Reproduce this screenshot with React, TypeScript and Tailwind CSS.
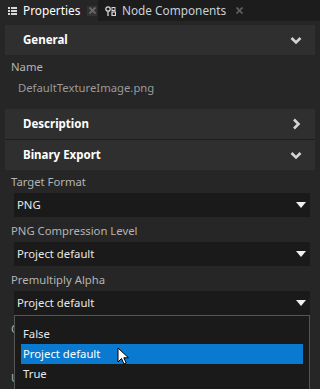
import React from "react";

const Chevron = ({ dir }: { dir: "down" | "right" }) => (
  <svg width="12" height="12" viewBox="0 0 12 12" className="block">
    {dir === "down" ? (
      <path d="M1.5 4 L6 8.5 L10.5 4" fill="none" stroke="#d4d4d4" strokeWidth="2.6" strokeLinejoin="miter" />
    ) : (
      <path d="M4 1.5 L8.5 6 L4 10.5" fill="none" stroke="#d4d4d4" strokeWidth="2.6" strokeLinejoin="miter" />
    )}
  </svg>
);

const Triangle = () => (
  <svg width="10" height="6" viewBox="0 0 10 6" className="block">
    <path d="M0 0 H10 L5 6 Z" fill="#f0f0f0" />
  </svg>
);

const Header = ({ title, open }: { title: string; open: boolean }) => (
  <div className="mx-[5px] h-[30px] bg-[#2f2f2f] flex items-center justify-between pl-[18px] pr-[13px]">
    <span className="text-[11.5px] font-bold text-white">{title}</span>
    <Chevron dir={open ? "down" : "right"} />
  </div>
);

const Field = ({ label, value }: { label: string; value: string }) => (
  <div className="flex flex-col">
    <div className="h-[16px] leading-[16px] pl-[11px] text-[11.3px] text-[#b4b4b4] whitespace-nowrap">{label}</div>
    <div className="mt-[3px] ml-[14px] mr-[10px] h-[24px] bg-[#1a1a1a] flex items-center justify-between pl-[3px] pr-[4px]">
      <span className="text-[11.3px] text-[#e8e8e8]">{value}</span>
      <Triangle />
    </div>
  </div>
);

export default function App() {
  return (
    <div
      className="w-[320px] h-[389px] bg-[#1c1c1c] overflow-hidden relative"
      style={{ fontFamily: '"Noto Sans", "Open Sans", sans-serif' }}
    >
      {/* Tabs */}
      <div className="h-[21px] flex items-stretch">
        <div className="w-[98px] bg-[#262626] flex items-center pl-[8px]">
          <svg width="9" height="8" viewBox="0 0 9 8" className="block">
            <rect x="0" y="0" width="2" height="2" fill="#d8d8d8" />
            <rect x="3" y="0" width="6" height="2" fill="#d8d8d8" />
            <rect x="0" y="3" width="2" height="2" fill="#d8d8d8" />
            <rect x="3" y="3" width="6" height="2" fill="#d8d8d8" />
            <rect x="0" y="6" width="2" height="2" fill="#d8d8d8" />
            <rect x="3" y="6" width="6" height="2" fill="#d8d8d8" />
          </svg>
          <span className="ml-[6px] text-[11.8px] text-white">Properties</span>
          <span className="ml-[7px] w-[10px] h-[10px] bg-[#333333] flex items-center justify-center">
            <svg width="7" height="7" viewBox="0 0 7 7" className="block">
              <path d="M0.5 0.5 L6.5 6.5 M6.5 0.5 L0.5 6.5" stroke="#6a6a6a" strokeWidth="1.8" />
            </svg>
          </span>
        </div>
        <div className="flex items-center pl-[7px]">
          <svg width="11" height="10" viewBox="0 0 11 10" className="block">
            <circle cx="3" cy="3" r="2.2" fill="none" stroke="#d8d8d8" strokeWidth="1.3" />
            <path d="M3 5.2 V10" stroke="#d8d8d8" strokeWidth="1.3" />
            <rect x="7" y="1.5" width="3" height="3" fill="none" stroke="#d8d8d8" strokeWidth="1" />
            <rect x="7" y="6" width="3.5" height="3.5" fill="none" stroke="#d8d8d8" strokeWidth="1.2" />
          </svg>
          <span className="ml-[6px] text-[11.8px] text-[#c8d0d8]">Node Components</span>
          <span className="ml-[10px] flex items-center">
            <svg width="7" height="7" viewBox="0 0 7 7" className="block">
              <path d="M0.5 0.5 L6.5 6.5 M6.5 0.5 L0.5 6.5" stroke="#5e5e5e" strokeWidth="1.8" />
            </svg>
          </span>
        </div>
      </div>

      {/* Panel */}
      <div className="bg-[#262626] h-[368px] pt-[4px]">
        <Header title="General" open />
        <div className="h-[16px] leading-[16px] mt-[4px] pl-[11px] text-[11.3px] text-[#b4b4b4]">Name</div>
        <div className="h-[16px] leading-[16px] mt-[5px] pl-[18px] text-[11.3px] text-[#9a9a9a]">DefaultTextureImage.png</div>
        <div className="h-[13px]" />
        <Header title="Description" open={false} />
        <div className="h-[1px] bg-[#1e1e1e] mx-[5px]" />
        <Header title="Binary Export" open />
        <div className="flex flex-col gap-[6px] pt-[4px]">
          <Field label="Target Format" value="PNG" />
          <Field label="PNG Compression Level" value="Project default" />
          <Field label="Premultiply Alpha" value="Project default" />
          <Field label="Compression" value="Project default" />
          <Field label="Use Mipmaps" value="Project default" />
        </div>
      </div>

      {/* Dropdown popup */}
      <div className="absolute left-[14px] top-[315px] w-[296px] h-[90px] bg-[#1a1a1a] border border-[#555555] pt-[8px]">
        <div className="h-[20px] leading-[20px] pl-[8px] text-[11.3px] text-[#e8e8e8]">False</div>
        <div className="h-[20px] leading-[20px] mx-[6px] bg-[#0a7ad0] pl-[2px] text-[11.3px] text-white">Project default</div>
        <div className="h-[20px] leading-[20px] pl-[8px] text-[11.3px] text-[#e8e8e8]">True</div>
      </div>

      {/* Cursor */}
      <svg className="absolute left-[117px] top-[347px]" width="13" height="19" viewBox="0 0 13 19">
        <path d="M1 1 V15 L4.5 11.5 L7 17 L9.2 16 L6.8 10.8 H11.5 Z" fill="#ffffff" stroke="#000000" strokeWidth="1" strokeLinejoin="miter" />
      </svg>
    </div>
  );
}
